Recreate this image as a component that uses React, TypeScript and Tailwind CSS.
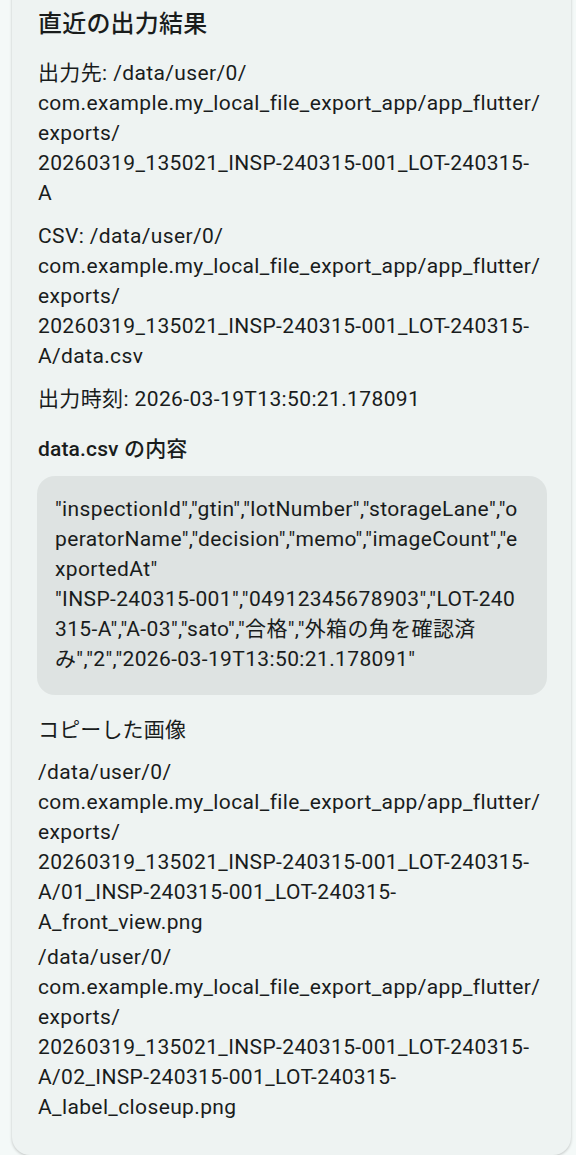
const FONT = 'font-["Roboto","Noto_Sans_CJK_JP",sans-serif]'

const OUTPUT_DIR = [
  '出力先: /data/user/0/',
  'com.example.my_local_file_export_app/app_flutter/',
  'exports/',
  '20260319_135021_INSP-240315-001_LOT-240315-',
  'A',
]

const CSV_PATH = [
  'CSV: /data/user/0/',
  'com.example.my_local_file_export_app/app_flutter/',
  'exports/',
  '20260319_135021_INSP-240315-001_LOT-240315-',
  'A/data.csv',
]

const CSV_BODY = [
  '"inspectionId","gtin","lotNumber","storageLane","o',
  'peratorName","decision","memo","imageCount","e',
  'xportedAt"',
  '"INSP-240315-001","04912345678903","LOT-240',
  '315-A","A-03","sato","合格","外箱の角を確認済',
  'み","2","2026-03-19T13:50:21.178091"',
]

const IMAGES = [
  [
    '/data/user/0/',
    'com.example.my_local_file_export_app/app_flutter/',
    'exports/',
    '20260319_135021_INSP-240315-001_LOT-240315-',
    'A/01_INSP-240315-001_LOT-240315-',
    'A_front_view.png',
  ],
  [
    '/data/user/0/',
    'com.example.my_local_file_export_app/app_flutter/',
    'exports/',
    '20260319_135021_INSP-240315-001_LOT-240315-',
    'A/02_INSP-240315-001_LOT-240315-',
    'A_label_closeup.png',
  ],
]

// Flutter wraps these paths on its own; lines are fixed here so the breaks match
function Lines({ lines }: { lines: string[] }) {
  return (
    <p className="text-[21px] leading-[30px] tracking-[0.375px] text-[#191c1c]">
      {lines.map((l, i) => (
        <span key={i} className="block whitespace-nowrap">{l}</span>
      ))}
    </p>
  )
}

export default function App() {
  return (
    <div className={`min-h-[1167px] bg-[#f4f9f8] pl-[12px] pr-[5px] ${FONT}`}>
      <div className="-mt-[18px] rounded-b-[18px] bg-[#eef3f2] px-[26px] pt-[24px] pb-[33px] shadow-[0_1px_3px_rgba(0,0,0,0.22)]">
        <h2 className="text-[24px] font-medium leading-[36px] tracking-[0.2px] text-[#191c1c]">直近の出力結果</h2>

        <div className="mt-[16px] flex flex-col gap-[13px]">
          <Lines lines={OUTPUT_DIR} />
          <Lines lines={CSV_PATH} />
          <Lines lines={['出力時刻: 2026-03-19T13:50:21.178091']} />
        </div>

        <p className="mt-[20px] text-[21px] font-medium leading-[30px] tracking-[0.15px] text-[#191c1c]">data.csv の内容</p>

        <div className="mt-[12px] mr-[-2px] ml-[-1px] rounded-[18px] bg-[#dee3e2] px-[18px] pt-[18px] pb-[21px]">
          <Lines lines={CSV_BODY} />
        </div>

        <p className="mt-[20px] text-[21px] leading-[30px] tracking-[0.15px] text-[#191c1c]">コピーした画像</p>

        <div className="mt-[12px] flex flex-col gap-[5px]">
          {IMAGES.map((img, i) => <Lines key={i} lines={img} />)}
        </div>
      </div>
    </div>
  )
}
